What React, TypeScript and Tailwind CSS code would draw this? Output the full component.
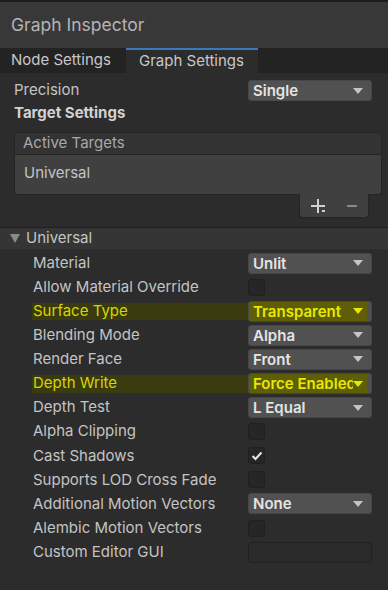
import * as React from "react";

type Row = {
	label: string;
	kind: "select" | "check" | "text";
	value?: string;
	checked?: boolean;
	highlight?: boolean;
};

const rows: Row[] = [
	{ label: "Material", kind: "select", value: "Unlit" },
	{ label: "Allow Material Override", kind: "check" },
	{ label: "Surface Type", kind: "select", value: "Transparent", highlight: true },
	{ label: "Blending Mode", kind: "select", value: "Alpha" },
	{ label: "Render Face", kind: "select", value: "Front" },
	{ label: "Depth Write", kind: "select", value: "Force Enabled", highlight: true },
	{ label: "Depth Test", kind: "select", value: "L Equal" },
	{ label: "Alpha Clipping", kind: "check" },
	{ label: "Cast Shadows", kind: "check", checked: true },
	{ label: "Supports LOD Cross Fade", kind: "check" },
	{ label: "Additional Motion Vectors", kind: "select", value: "None" },
	{ label: "Alembic Motion Vectors", kind: "check" },
	{ label: "Custom Editor GUI", kind: "text" },
];

function Arrow({ color }: { color: string }) {
	return (
		<svg width="10" height="6" viewBox="0 0 10 6" className="relative shrink-0">
			<path d="M0 0 L10 0 L5 6 Z" fill={color} />
		</svg>
	);
}

function Dropdown({ value, highlight }: { value: string; highlight?: boolean }) {
	return (
		<div className="relative w-[124px] h-[21px] rounded-[3px] bg-[#515151] border border-[#474747] flex items-center pl-[4px] pr-[8px] overflow-hidden">
			{highlight && <div className="absolute inset-y-0 left-0 right-[4px] bg-[#5e5e08]" />}
			<span
				className={`relative flex-1 overflow-hidden whitespace-nowrap text-[15px] font-semibold leading-[19px] ${
					highlight ? "text-[#e8e800]" : "text-[#e4e4e4]"
				}`}
			>
				{value}
			</span>
			<Arrow color={highlight ? "#e8e800" : "#c4c4c4"} />
		</div>
	);
}

function Checkbox({ checked }: { checked?: boolean }) {
	return (
		<div className="w-[17px] h-[17px] rounded-[3px] bg-[#262626] border border-[#1f1f1f] flex items-center justify-center">
			{checked && (
				<svg width="12" height="10" viewBox="0 0 12 10">
					<path d="M1.5 5 L4.5 8 L10.5 1.5" stroke="#e6e6e6" strokeWidth="2" fill="none" />
				</svg>
			)}
		</div>
	);
}

export default function App(): React.ReactElement {
	return (
		<div className="w-[388px] h-[590px] bg-[#2c2c2c] font-['Inter','Liberation_Sans',sans-serif] overflow-hidden text-[#c4c4c4]">
			{/* title */}
			<div className="h-[48px] bg-[#383838] border-t-2 border-[#1c1c1c] flex items-center pl-[11px] text-[17.5px] text-[#b4b4b4]">
				Graph Inspector
			</div>

			{/* tabs */}
			<div className="h-[25px] bg-[#232323] flex">
				<div className="w-[126px] pl-[11px] flex items-center text-[15px] text-[#c8c8c8]">Node Settings</div>
				<div className="w-[132px] bg-[#2c2c2c] border-t-2 border-[#3a79bb] pl-[13px] flex items-center text-[15px] text-[#c8c8c8]">
					Graph Settings
				</div>
			</div>

			<div className="h-[7px]" />
			<div className="h-[21px] flex items-center pl-[14px] pr-[16px]">
				<span className="flex-1 text-[15px] text-[#c4c4c4]">Precision</span>
				<Dropdown value="Single" />
			</div>
			<div className="h-[24px] flex items-center pl-[14px] text-[15px] font-bold text-[#d2d2d2]">Target Settings</div>

			{/* active targets list */}
			<div className="mt-[7px] ml-[14px] mr-[6px]">
				<div className="h-[23px] rounded-t-[4px] bg-[#333333] border border-[#252525] flex items-center pl-[8px] text-[15px] text-[#a8a8a8]">
					Active Targets
				</div>
				<div className="h-[40px] rounded-b-[4px] bg-[#404040] border-x border-b border-[#252525] pl-[9px] pt-[7px] text-[15px] text-[#c4c4c4]">
					Universal
				</div>
				<div className="flex justify-end pr-[13px]">
					<div className="w-[70px] h-[24px] -mt-px bg-[#404040] border-x border-b border-[#252525] rounded-b-[4px] flex items-center justify-center gap-[22px]">
						<svg width="14" height="14" viewBox="0 0 14 14">
							<path d="M6 0 H8 V6 H14 V8 H8 V14 H6 V8 H0 V6 H6 Z" fill="#cfcfcf" />
							<rect x="11" y="11" width="3" height="2" fill="#cfcfcf" />
						</svg>
						<div className="w-[10px] h-[2px] bg-[#8a8a8a]" />
					</div>
				</div>
			</div>

			{/* foldout */}
			<div className="mt-[9px] border-t border-[#1f1f1f] h-[22px] bg-[#353535] flex items-center pl-[10px] gap-[6px] text-[15px] text-[#c4c4c4]">
				<svg width="10" height="9" viewBox="0 0 10 9">
					<path d="M0 0 L10 0 L5 9 Z" fill="#8a8a8a" />
				</svg>
				Universal
			</div>

			<div className="pt-[2px]">
				{rows.map((row) => (
					<div key={row.label} className="relative h-[24.1px] flex items-center pl-[33px] pr-[16px]">
						{row.highlight && <div className="absolute left-[32px] right-[20px] top-[4px] bottom-[3px] bg-[#3b3b10]" />}
						<span
							className={`relative flex-1 text-[15px] ${row.highlight ? "text-[#d6d600]" : "text-[#c4c4c4]"}`}
						>
							{row.label}
						</span>
						<div className="relative w-[124px] flex">
							{row.kind === "select" && <Dropdown value={row.value ?? ""} highlight={row.highlight} />}
							{row.kind === "check" && <Checkbox checked={row.checked} />}
							{row.kind === "text" && (
								<div className="w-[124px] h-[21px] rounded-[3px] bg-[#2a2a2a] border border-[#212121]" />
							)}
						</div>
					</div>
				))}
			</div>
		</div>
	);
}
